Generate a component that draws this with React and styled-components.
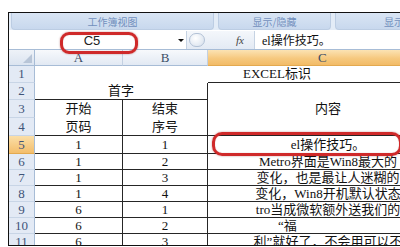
import { Fragment } from "react"
import styled, { createGlobalStyle } from "styled-components"

const GlobalStyle = createGlobalStyle`
    html, body {
        margin: 0;
        padding: 0;
        background: #fff;
    }
    body {
        font-family: "Liberation Serif", "Noto Sans CJK SC", serif;
    }
`

const Page = styled.div`
    width: 400px;
    height: 247px;
    padding: 12px 0 0 8px;
    box-sizing: border-box;
    overflow: hidden;
`

const Frame = styled.div`
    position: relative;
    width: 392px;
    height: 234px;
    box-sizing: border-box;
    border-top: 1px solid #111;
    border-left: 1px solid #111;
    border-bottom: 1px solid #111;
    overflow: hidden;
    background: #fff;
`

const Ribbon = styled.div`
    display: flex;
    gap: 4px;
    height: 17px;
    padding-left: 2px;
    background: #e3ecf7;
    border-bottom: 1px solid #fff;
`

const RibbonGroup = styled.div`
    flex: 0 0 ${props => props.$w}px;
    display: flex;
    align-items: center;
    justify-content: ${props => props.$start ? "flex-start" : "center"};
    padding-left: ${props => props.$start ? 48 : 0}px;
    box-sizing: border-box;
    border: 1px solid #bccde3;
    border-top: none;
    border-radius: 0 0 4px 4px;
    background: linear-gradient(#d9e5f4, #c8d8ed);
    color: #7290bd;
    font-family: "Noto Sans CJK SC", sans-serif;
    font-size: 10px;
    white-space: nowrap;
    overflow: hidden;
`

const FormulaBar = styled.div`
    display: flex;
    height: 19px;
    box-sizing: border-box;
    border-bottom: 1px solid #a7bcd6;
    background: #fff;
`

const NameBox = styled.div`
    flex: 0 0 166px;
    display: flex;
    align-items: center;
    justify-content: center;
    font-family: "Liberation Sans", sans-serif;
    font-size: 13px;
    color: #222;
`

const DropArrow = styled.div`
    flex: 0 0 11px;
    display: flex;
    align-items: center;
    justify-content: center;
    border-right: 1px solid #c6d3e3;
    &::after {
        content: "";
        border-left: 3px solid transparent;
        border-right: 3px solid transparent;
        border-top: 3px solid #111;
    }
`

const ButtonStrip = styled.div`
    flex: 0 0 68px;
    display: flex;
    align-items: center;
    padding-left: 2px;
    box-sizing: border-box;
    background: linear-gradient(#f4f7fb, #e3eaf4);
    border-right: 1px solid #c6d3e3;
`

const CancelButton = styled.div`
    width: 16px;
    height: 14px;
    border-radius: 8px;
    border: 1px solid #b3c2d6;
    background: radial-gradient(circle at 40% 35%, #ffffff, #d4deeb);
    box-sizing: border-box;
`

const Fx = styled.span`
    margin-left: auto;
    margin-right: 10px;
    font-family: "Liberation Serif", serif;
    font-style: italic;
    font-size: 11px;
    color: #444;
`

const FormulaInput = styled.div`
    flex: 1;
    display: flex;
    align-items: center;
    padding-left: 7px;
    font-family: "Liberation Serif", "Noto Sans CJK SC", serif;
    font-size: 12px;
    color: #111;
    white-space: nowrap;
`

const Sheet = styled.div`
    display: grid;
    grid-template-columns: 26px 88px 85px 240px;
    grid-template-rows: 16px 17px 17px 18px 18px 18px 16px 16px 16px 16px 16px 16px;
`

const Corner = styled.div`
    position: relative;
    background: linear-gradient(#eef2f8, #dbe4f0);
    border-right: 1px solid #a7bcd6;
    border-bottom: 1px solid #a7bcd6;
    &::after {
        content: "";
        position: absolute;
        right: 2px;
        bottom: 2px;
        border-left: 9px solid transparent;
        border-bottom: 9px solid #b8c5d7;
    }
`

const ColHead = styled.div`
    display: flex;
    align-items: center;
    justify-content: ${props => props.$wide ? "flex-start" : "center"};
    padding-left: ${props => props.$wide ? 110 : 0}px;
    box-sizing: border-box;
    background: ${props => props.$active
        ? "linear-gradient(#fbe3b4, #f6c97f 55%, #f2bb67)"
        : "linear-gradient(#f7f9fc, #e2e9f3)"};
    border-right: 1px solid ${props => props.$active ? "#e3a94f" : "#c3d0e1"};
    border-bottom: 1px solid ${props => props.$active ? "#e3a94f" : "#a7bcd6"};
    color: #3b4d66;
    font-size: 13px;
`

const RowHead = styled.div`
    display: flex;
    align-items: center;
    justify-content: center;
    background: ${props => props.$active
        ? "linear-gradient(#fbdfa8, #f3be6c)"
        : "#e3eaf5"};
    border-right: 1px solid #a7bcd6;
    border-bottom: 1px solid ${props => props.$active ? "#e3a94f" : "#c8d5e6"};
    box-sizing: border-box;
    color: #3f5478;
    font-size: 13px;
`

const Cell = styled.div`
    grid-column: span ${props => props.$cols || 1};
    grid-row: span ${props => props.$rows || 1};
    display: flex;
    flex-direction: column;
    align-items: ${props => props.$indent ? "flex-start" : "center"};
    justify-content: center;
    padding-left: ${props => props.$indent || 0}px;
    box-sizing: border-box;
    border-right: ${props => props.$r ? "1px solid #262626" : "none"};
    border-bottom: ${props => props.$b ? "1px solid #262626" : "none"};
    font-size: 13px;
    line-height: 18px;
    color: #111;
    white-space: nowrap;
`

const Mark = styled.div`
    position: absolute;
    left: ${props => props.$x}px;
    top: ${props => props.$y}px;
    width: ${props => props.$w}px;
    height: ${props => props.$h}px;
    box-sizing: border-box;
    border: 3px solid #cf2a2a;
    border-radius: ${props => props.$rad}px;
    box-shadow: 0 0 2px rgba(120, 0, 0, 0.45), inset 0 0 1px rgba(120, 0, 0, 0.4);
    pointer-events: none;
`

const rows = [
    { n: 5, a: "1", b: "1", c: "el操作技巧。" },
    { n: 6, a: "1", b: "2", c: "Metro界面是Win8最大的" },
    { n: 7, a: "1", b: "3", c: "变化，也是最让人迷糊的" },
    { n: 8, a: "1", b: "4", c: "变化，Win8开机默认状态" },
    { n: 9, a: "6", b: "1", c: "tro当成微软额外送我们的" },
    { n: 10, a: "6", b: "2", c: "“福", indent: 70 },
    { n: 11, a: "6", b: "3", c: "利”就好了，不会用可以不" },
]

const App = () => {
    return (
        <Page>
            <GlobalStyle />
            <Frame>
                <Ribbon>
                    <RibbonGroup $w={203}>工作簿视图</RibbonGroup>
                    <RibbonGroup $w={113}>显示/隐藏</RibbonGroup>
                    <RibbonGroup $w={80} $start>显示比例</RibbonGroup>
                </Ribbon>
                <FormulaBar>
                    <NameBox>C5</NameBox>
                    <DropArrow />
                    <ButtonStrip>
                        <CancelButton />
                        <Fx>fx</Fx>
                    </ButtonStrip>
                    <FormulaInput>el操作技巧。</FormulaInput>
                </FormulaBar>
                <Sheet>
                    <Corner />
                    <ColHead>A</ColHead>
                    <ColHead>B</ColHead>
                    <ColHead $active $wide>C</ColHead>

                    <RowHead>1</RowHead>
                    <Cell $cols={2} />
                    <Cell $b $indent={35}>EXCEL标识</Cell>

                    <RowHead>2</RowHead>
                    <Cell $cols={2} $b $r>首字</Cell>
                    <Cell $rows={3} $b>内容</Cell>

                    <RowHead>3</RowHead>
                    <Cell $rows={2} $b $r><span>开始</span><span>页码</span></Cell>
                    <Cell $rows={2} $b $r><span>结束</span><span>序号</span></Cell>
                    <RowHead>4</RowHead>

                    {rows.map(row => (
                        <Fragment key={row.n}>
                            <RowHead $active={row.n === 5}>{row.n}</RowHead>
                            <Cell $b $r>{row.a}</Cell>
                            <Cell $b $r>{row.b}</Cell>
                            <Cell $b $indent={row.indent}>{row.c}</Cell>
                        </Fragment>
                    ))}
                </Sheet>
                <Mark $x={51} $y={19} $w={78} $h={22} $rad={9} />
                <Mark $x={203} $y={119} $w={190} $h={24} $rad={10} />
            </Frame>
        </Page>
    )
}

export default App
